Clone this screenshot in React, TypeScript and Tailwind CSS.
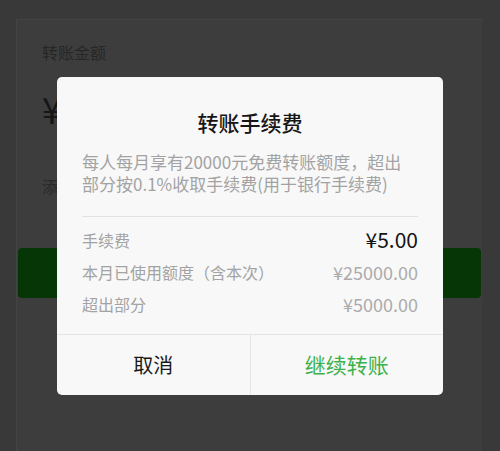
import React from "react";

const font = { fontFamily: '"Noto Sans CJK SC", "Noto Sans", sans-serif' };

function FeeRow({ label, value, strong }: { label: string; value: string; strong?: boolean }) {
  return (
    <div className="flex h-[32px] items-center justify-between">
      <span className="text-[16px] text-[#a3a3a3]">{label}</span>
      <span className={strong ? "text-[21px] text-[#151515]" : "text-[18px] text-[#ababab]"}>{value}</span>
    </div>
  );
}

export default function App() {
  return (
    <div className="relative h-[451px] w-[500px] overflow-hidden bg-[#393939]" style={font}>
      {/* dimmed transfer form behind the dialog */}
      <div className="ml-[16px] mr-[18px] mt-[19px] h-[440px] border-l border-t border-[#444] bg-[#3d3d3d]">
        <div className="px-[25px] pt-[20px]">
          <div className="text-[16px] leading-[24px] text-[#262626]">转账金额</div>
          <div className="mt-[24px] text-[36px] leading-[40px] text-[#161616]">¥</div>
          <div className="mt-[46px] text-[16px] leading-[24px] text-[#2a2a2a]">添加转账说明</div>
        </div>
        <div className="mx-[1px] mt-[50px] h-[50px] rounded-[4px] bg-[#063606]" />
      </div>

      {/* fee dialog */}
      <div className="absolute left-[57px] top-[77px] flex h-[318px] w-[386px] flex-col rounded-[5px] bg-[#f8f8f8]">
        <div className="px-[25px] pt-[30px]">
          <div className="text-center text-[21px] font-medium leading-[30px] text-[#161616]">转账手续费</div>
          <p className="mt-[14px] whitespace-nowrap text-[17px] leading-[22px] text-[#a3a3a3]">
            每人每月享有20000元免费转账额度，超出
            <br />
            部分按0.1%收取手续费(用于银行手续费)
          </p>
          <div className="mt-[21px] h-px bg-[#e2e2e2]" />
          <div className="mt-[7px] pb-[14px]">
            <FeeRow label="手续费" value="¥5.00" strong />
            <FeeRow label="本月已使用额度（含本次）" value="¥25000.00" />
            <FeeRow label="超出部分" value="¥5000.00" />
          </div>
        </div>
        <div className="flex flex-1 border-t border-[#e4e4e4]">
          <button className="flex flex-1 items-center justify-center text-[20px] text-[#181818]">取消</button>
          <div className="w-px bg-[#e4e4e4]" />
          <button className="flex flex-1 items-center justify-center text-[21px] text-[#3db14a]">继续转账</button>
        </div>
      </div>
    </div>
  );
}
